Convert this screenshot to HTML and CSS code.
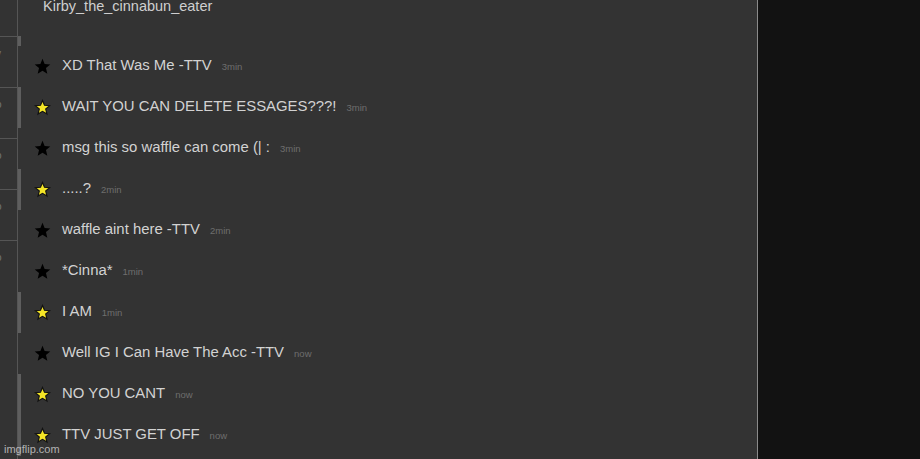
FILE: index.html
```html
<!DOCTYPE html>
<html>
<head>
<meta charset="utf-8">
<link rel="stylesheet" href="styles.css">
</head>
<body>
<div class="app">
  <aside class="strip">
    <div class="strip-item"><span class="frag">v</span></div>
    <div class="strip-item"><span class="frag">o</span></div>
    <div class="strip-item"><span class="frag">o</span></div>
    <div class="strip-item"><span class="frag">o</span></div>
    <div class="strip-item last"><span class="frag">o</span></div>
  </aside>
  <main class="chat">
    <div class="author">Kirby_the_cinnabun_eater</div>
    <div class="stub"></div>
    <ul class="messages">
      <li class="row"><svg class="star black" viewBox="0 0 24 24"><polygon points="12,1 15,8.4 23,9 16.9,14.2 18.8,22.2 12,18 5.2,22.2 7.1,14.2 1,9 9,8.4"/></svg><span class="msg"><span class="text">XD That Was Me -TTV</span><span class="time">3min</span></span></li>
      <li class="row hl"><svg class="star yellow" viewBox="0 0 24 24"><polygon points="12,2 14.8,8.9 22.2,9.4 16.5,14.1 18.3,21.3 12,17.4 5.7,21.3 7.5,14.1 1.8,9.4 9.2,8.9"/></svg><span class="msg"><span class="text">WAIT YOU CAN DELETE ESSAGES???!</span><span class="time">3min</span></span></li>
      <li class="row"><svg class="star black" viewBox="0 0 24 24"><polygon points="12,1 15,8.4 23,9 16.9,14.2 18.8,22.2 12,18 5.2,22.2 7.1,14.2 1,9 9,8.4"/></svg><span class="msg"><span class="text">msg this so waffle can come (| :</span><span class="time">3min</span></span></li>
      <li class="row hl"><svg class="star yellow" viewBox="0 0 24 24"><polygon points="12,2 14.8,8.9 22.2,9.4 16.5,14.1 18.3,21.3 12,17.4 5.7,21.3 7.5,14.1 1.8,9.4 9.2,8.9"/></svg><span class="msg"><span class="text">.....?</span><span class="time">2min</span></span></li>
      <li class="row"><svg class="star black" viewBox="0 0 24 24"><polygon points="12,1 15,8.4 23,9 16.9,14.2 18.8,22.2 12,18 5.2,22.2 7.1,14.2 1,9 9,8.4"/></svg><span class="msg"><span class="text">waffle aint here -TTV</span><span class="time">2min</span></span></li>
      <li class="row"><svg class="star black" viewBox="0 0 24 24"><polygon points="12,1 15,8.4 23,9 16.9,14.2 18.8,22.2 12,18 5.2,22.2 7.1,14.2 1,9 9,8.4"/></svg><span class="msg"><span class="text">*Cinna*</span><span class="time">1min</span></span></li>
      <li class="row hl"><svg class="star yellow" viewBox="0 0 24 24"><polygon points="12,2 14.8,8.9 22.2,9.4 16.5,14.1 18.3,21.3 12,17.4 5.7,21.3 7.5,14.1 1.8,9.4 9.2,8.9"/></svg><span class="msg"><span class="text">I AM</span><span class="time">1min</span></span></li>
      <li class="row"><svg class="star black" viewBox="0 0 24 24"><polygon points="12,1 15,8.4 23,9 16.9,14.2 18.8,22.2 12,18 5.2,22.2 7.1,14.2 1,9 9,8.4"/></svg><span class="msg"><span class="text">Well IG I Can Have The Acc -TTV</span><span class="time">now</span></span></li>
      <li class="row hl"><svg class="star yellow" viewBox="0 0 24 24"><polygon points="12,2 14.8,8.9 22.2,9.4 16.5,14.1 18.3,21.3 12,17.4 5.7,21.3 7.5,14.1 1.8,9.4 9.2,8.9"/></svg><span class="msg"><span class="text">NO YOU CANT</span><span class="time">now</span></span></li>
      <li class="row hl"><svg class="star yellow" viewBox="0 0 24 24"><polygon points="12,2 14.8,8.9 22.2,9.4 16.5,14.1 18.3,21.3 12,17.4 5.7,21.3 7.5,14.1 1.8,9.4 9.2,8.9"/></svg><span class="msg"><span class="text">TTV JUST GET OFF</span><span class="time">now</span></span></li>
    </ul>
  </main>
  <aside class="side"></aside>
</div>
<div class="watermark">imgflip.com</div>
</body>
</html>
```
FILE: styles.css
```css
html, body {
  margin: 0;
  padding: 0;
  height: 100%;
  overflow: hidden;
  background: #333333;
  font-family: "Liberation Sans", Arial, sans-serif;
}

.app {
  display: flex;
  height: 459px;
}

.strip {
  width: 17px;
  flex: none;
  padding-top: 36px;
  overflow: hidden;
}

.strip-item {
  box-sizing: border-box;
  height: 51px;
  border-top: 1px solid #555555;
  padding-top: 11px;
  overflow: hidden;
}

.strip-item.last {
  height: 60px;
}

.frag {
  display: block;
  margin-left: -4px;
  font-size: 10px;
  line-height: 12px;
  color: #777777;
}

.chat {
  flex: 1;
  border-left: 1px solid #555555;
  border-right: 1px solid #8a8a8a;
  overflow: hidden;
}

.author {
  margin-top: -2px;
  padding-left: 25px;
  font-size: 14.5px;
  line-height: 17px;
  color: #cfcfcf;
}

.stub {
  height: 10px;
  margin-top: 21px;
  margin-left: -1px;
  width: 4px;
  background: #5e5e5e;
}

.messages {
  list-style: none;
  margin: 0;
  padding: 0;
}

.row {
  display: flex;
  align-items: center;
  height: 41px;
  padding-left: 16px;
}

.row.hl {
  margin-left: -1px;
  border-left: 4px solid #5e5e5e;
  padding-left: 13px;
}

.star {
  width: 17px;
  height: 17px;
  flex: none;
  margin-right: 11px;
}

.star.black polygon {
  fill: #000000;
}

.star.yellow polygon {
  fill: #f4e526;
  stroke: #111111;
  stroke-width: 1.6;
  stroke-linejoin: miter;
}

.msg {
  display: flex;
  align-items: baseline;
  gap: 10px;
  margin-top: -2px;
}

.text {
  font-size: 14.9px;
  line-height: 17px;
  color: #d2d2d2;
}

.time {
  font-size: 9.5px;
  color: #6e6e6e;
}

.side {
  width: 162px;
  flex: none;
  background: #121212;
}

.watermark {
  position: absolute;
  left: 4px;
  bottom: 3px;
  font-size: 11px;
  line-height: 13px;
  color: #c8c8c8;
  opacity: 0.85;
}
```
